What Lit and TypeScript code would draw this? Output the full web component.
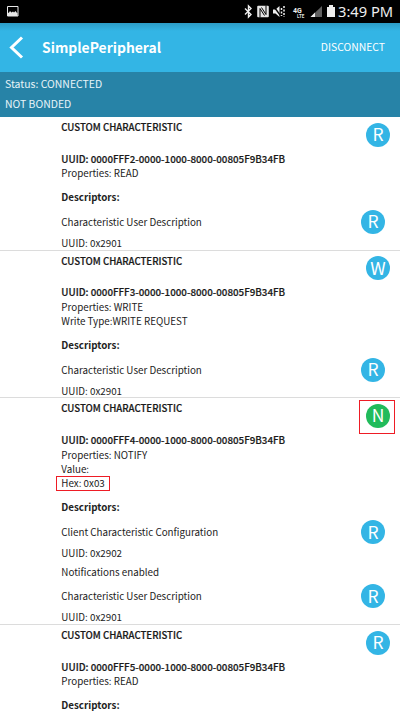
import { LitElement, html, css, svg } from "lit";
import { customElement, property } from "lit/decorators.js";

interface Descriptor { name: string; uuid: string; note?: string; }
interface Characteristic {
  id: string; action: string; lines: string[]; marked?: string; descriptors: Descriptor[];
}

const userDescription: Descriptor = { name: "Characteristic User Description", uuid: "0x2901" };
const items: Characteristic[] = [
  { id: "FFF2", action: "R", lines: ["Properties: READ"], descriptors: [userDescription] },
  { id: "FFF3", action: "W", lines: ["Properties: WRITE", "Write Type:WRITE REQUEST"], descriptors: [userDescription] },
  { id: "FFF4", action: "N", lines: ["Properties: NOTIFY", "Value:"], marked: "Hex: 0x03",
    descriptors: [{ name: "Client Characteristic Configuration", uuid: "0x2902", note: "Notifications enabled" }, userDescription] },
  { id: "FFF5", action: "R", lines: ["Properties: READ"], descriptors: [] },
];

@customElement("round-action")
export class RoundAction extends LitElement {
  @property() letter = "R";
  static styles = css`
    :host { display: block; width: 24px; height: 24px; }
    .disc { width: 24px; height: 24px; border-radius: 50%; background: #33b5e5; color: #fff;
      display: flex; align-items: center; justify-content: center;
      font: 17.500px/21px "Noto Sans CJK SC", sans-serif; }
    .letter { height: 23px; }
    .on { background: #21bb5b; }
  `;
  render() {
    return html`<div class="disc ${this.letter === "N" ? "on" : ""}"><span class="letter">${this.letter}</span></div>`;
  }
}

@customElement("status-bar")
export class StatusBar extends LitElement {
  static styles = css`
    :host { display: flex; height: 23px; background: #000; color: #eee; align-items: center; }
    svg { display: block; flex: none; }
    .grow { flex: 1; }
    .clock { width: 62px; font: 14.7px/23px "Noto Sans", sans-serif; white-space: nowrap; }
  `;
  render() {
    return html`
      <svg width="20" height="23">${svg`
        <path d="M7.5 6.5h10.500v9.500h-10.500z" fill="none" stroke="#e8e8e8"/>
        <path d="M8 13l1-.5 1-1.500 1.500 1.500 1.500-1 1 1 1.500-1.500 1.500 2 .5 0V16H8z" fill="#e8e8e8"/>`}
      </svg>
      <span class="grow"></span>
      <svg width="98" height="23" viewBox="240 0 98 23">${svg`
        <path d="M245 8.500l6 6-2.500 2.500V6l2.500 2.500-6 6" fill="none" stroke="#eee" stroke-width="1.400"/>
        <rect x="257.200" y="5.700" width="11.600" height="11.600" rx="1" fill="#e6e6e6"/>
        <path d="M260 17.500V8.500l4.500 7M261.500 7.500l4.500 7V5.500" fill="none" stroke="#000" stroke-width="1"/>
        <path d="M273 9.500h2.500l4-3.500v11l-4-3.500H273z" fill="#eee"/>
        <path d="M273.500 6l8 11" stroke="#000" stroke-width="1.300"/>
        <path d="M281.500 8v8M284 6v11" stroke="#eee" stroke-width="1.500" stroke-dasharray="2 1.500"/>
        <text x="293" y="13" fill="#eee" font-family="Roboto" font-weight="700" font-size="7">4G</text>
        <text x="297" y="17.800" fill="#ddd" font-family="Roboto" font-weight="700" font-size="4.500">LTE</text>
        <path d="M310.500 17L322 6v11z" fill="#606060"/>
        <path d="M310.500 17l4.500-4.500V17z" fill="#eee"/>
        <path d="M327 7h2V5h4v2h2v10h-8z" fill="#eee"/>`}
      </svg>
      <span class="clock">3:49 PM</span>`;
  }
}

@customElement("characteristic-card")
export class CharacteristicCard extends LitElement {
  @property({ attribute: false }) item!: Characteristic;
  static styles = css`
    :host { display: block; border-bottom: 1px solid #dcdcdc; padding: 3px 0 0 61.300px; color: #222; }
    .head { display: flex; justify-content: space-between; height: 31.700px; }
    .title, .strong { font-weight: 500; color: #1a1a1a; -webkit-text-stroke: .2px #1a1a1a; }
    .title { line-height: 15.500px; font-size: 9.650px; }
    .act { position: relative; margin: 2.500px 10px 0 0; }
    .line { line-height: 14.400px; height: 14.400px; white-space: nowrap; }
    .desc-title { font-weight: 700; line-height: 15px; margin-top: 9.400px; margin-bottom: 7px; }
    .desc { display: flex; justify-content: space-between; height: 37.700px; }
    .desc.noted { height: 64.200px; }
    .desc-line { line-height: 21px; height: 21px; }
    .desc-line.note { line-height: 17px; height: 17px; }
    .desc round-action { margin: -2px 15px 0 0; }
    .mark { position: relative; }
    .mark::after { content: ""; position: absolute; left: -5px; top: 0; width: 54px; height: 15px;
      box-sizing: border-box; border: 1px solid #ee1c25; }
    .mark-act::after { content: ""; position: absolute; left: -7px; top: -4px; width: 36px; height: 34px;
      box-sizing: border-box; border: 1px solid #ee1c25; }
  `;
  render() {
    const c = this.item;
    return html`
      <div class="head"><span class="title">CUSTOM CHARACTERISTIC</span>
        <round-action class="act ${c.marked ? "mark-act" : ""}" .letter=${c.action}></round-action></div>
      <div class="line strong">UUID: 0000${c.id}-0000-1000-8000-00805F9B34FB</div>
      ${c.lines.map((l) => html`<div class="line">${l}</div>`)}
      ${c.marked ? html`<div class="line mark">${c.marked}</div>` : ""}
      <div class="desc-title">Descriptors:</div>
      ${c.descriptors.map((d) => html`<div class="desc ${d.note ? "noted" : ""}">
        <div><div class="desc-line">${d.name}</div><div class="desc-line">UUID: ${d.uuid}</div>
        ${d.note ? html`<div class="desc-line note">${d.note}</div>` : ""}</div>
        <round-action letter="R"></round-action></div>`)}`;
  }
}

@customElement("app-root")
export class AppRoot extends LitElement {
  static styles = css`
    :host { display: block; height: 711px; overflow: hidden; background: #fff;
      font: 9.800px/14px "Noto Sans CJK SC", sans-serif; }
    .bar { height: 49px; display: flex; align-items: center; color: #fff;
      background: linear-gradient(#2c9cc6, #33b5e5 8px); }
    .back { width: 42px; display: block; flex: none; }
    .name { flex: 1; font-size: 13.900px; font-weight: 700; line-height: 20px; margin-top: -2px; }
    .disconnect { font-size: 10.400px; margin: -2px 15px 0 0; }
    .status { height: 45px; background: #2783a7; color: #e8f4f8; padding: 2px 5px; box-sizing: border-box;
      font-size: 10.450px; line-height: 20px; }
  `;
  render() {
    return html`
      <status-bar></status-bar>
      <div class="bar">
        <svg class="back" height="49" viewBox="0 23 42 49"><path d="M22 37.500L11.500 47.500 22 57.500" fill="none" stroke="#fff" stroke-width="3"/></svg>
        <span class="name">SimplePeripheral</span><span class="disconnect">DISCONNECT</span>
      </div>
      <div class="status"><div>Status: CONNECTED</div><div>NOT BONDED</div></div>
      ${items.map((i) => html`<characteristic-card .item=${i}></characteristic-card>`)}`;
  }
}
